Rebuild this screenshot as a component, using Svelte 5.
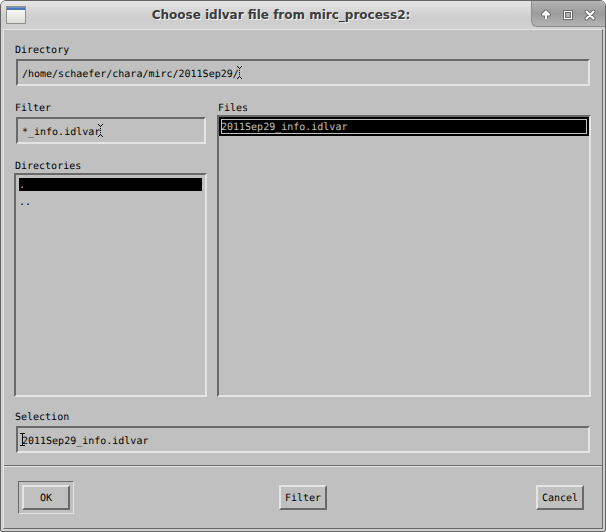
<script>
  let title = 'Choose idlvar file from mirc_process2:';
  let directory = $state('/home/schaefer/chara/mirc/2011Sep29/');
  let filter = $state('*_info.idlvar');
  let selection = $state('2011Sep29_info.idlvar');
  let dirs = ['.', '..'];
  let files = ['2011Sep29_info.idlvar'];
  let curDir = $state('.');
  let curFile = $state('2011Sep29_info.idlvar');

  function pickFile(f) {
    curFile = f;
    selection = f;
  }
</script>

{#snippet caret(pos, active)}
  <svg class="caret" style="left: calc(2px + {pos}ch)" width="5" height="13" viewBox="0 0 5 13" aria-hidden="true">
    {#if active}
      <path d="M0 .5h5M0 12.5h5M2.5 0v13" />
    {:else}
      <path d="M0 .5h1M4 .5h1M1 1.5h1M3 1.5h1M1 11.5h1M3 11.5h1M0 12.5h1M4 12.5h1M2.5 2v9" stroke-dasharray="1 1" />
    {/if}
  </svg>
{/snippet}

<div class="window">
  <header>
    <svg class="app" width="20" height="18" viewBox="0 0 20 18" aria-hidden="true">
      <defs>
        <linearGradient id="paper" x1="0" y1="0" x2="0" y2="1">
          <stop offset="0" stop-color="#fff" />
          <stop offset="1" stop-color="#dcdcd8" />
        </linearGradient>
      </defs>
      <rect x=".5" y=".5" width="19" height="17" fill="url(#paper)" stroke="#8f908c" />
      <rect x="1" y="1" width="18" height="3" fill="#4a78b5" />
      <rect x="1" y="1" width="18" height="1" fill="#7596c4" />
    </svg>
    <h1>{title}</h1>
    <div class="controls">
      <button aria-label="Shade">
        <svg width="12" height="12" viewBox="0 0 12 12">
          <path d="M6 9.500V3M3 5.500l3-3 3 3z" stroke="#707070" stroke-width="4" stroke-linejoin="round" />
          <path d="M6 10V3M3 5.500l3-3 3 3z" fill="#fff" stroke="#fff" stroke-width="2" stroke-linejoin="round" />
        </svg>
      </button>
      <button aria-label="Maximize">
        <svg width="12" height="12" viewBox="0 0 12 12">
          <rect x="1.500" y="1.500" width="9" height="9" fill="#fff" stroke="#707070" />
          <rect x="3.500" y="3.500" width="5" height="5" fill="#b0b0b0" stroke="#707070" />
        </svg>
      </button>
      <button aria-label="Close">
        <svg width="12" height="12" viewBox="0 0 12 12">
          <path d="M2.500 2.500l7 7M9.500 2.500l-7 7" stroke="#707070" stroke-width="4" stroke-linecap="round" />
          <path d="M2.500 2.500l7 7M9.500 2.500l-7 7" stroke="#fff" stroke-width="2" stroke-linecap="round" />
        </svg>
      </button>
    </div>
  </header>

  <main>
    <div class="form">
      <div class="group">
        <label for="directory">Directory</label>
        <div class="field">
          <input id="directory" bind:value={directory} />
          {@render caret(directory.length, false)}
        </div>
      </div>

      <div class="panes">
        <div class="side">
          <div class="group">
            <label for="filter">Filter</label>
            <div class="field">
              <input id="filter" bind:value={filter} />
              {@render caret(filter.length, false)}
            </div>
          </div>
          <div class="group tall">
            <span class="label" id="dirs">Directories</span>
            <div class="list dirs" role="listbox" aria-labelledby="dirs">
              {#each dirs as d}
                <button role="option" aria-selected={d === curDir} class:selected={d === curDir} onclick={() => (curDir = d)}>{d}</button>
              {/each}
            </div>
          </div>
        </div>
        <div class="group tall">
          <span class="label" id="files">Files</span>
          <div class="list files" role="listbox" aria-labelledby="files">
            {#each files as f}
              <button role="option" aria-selected={f === curFile} class:selected={f === curFile} onclick={() => pickFile(f)}>{f}</button>
            {/each}
          </div>
        </div>
      </div>

      <div class="group">
        <label for="selection">Selection</label>
        <div class="field">
          <input id="selection" bind:value={selection} />
          {@render caret(0, true)}
        </div>
      </div>
    </div>

    <div class="actions">
      <span class="ring default"><button>OK</button></span>
      <span class="ring"><button>Filter</button></span>
      <span class="ring"><button>Cancel</button></span>
    </div>
  </main>
</div>

<style>
  :global(body) { margin: 0; background: #fff; }
  * { box-sizing: border-box; }
  .window {
    --bg: #c0c0c0;
    --lo: #696969;
    --hi: #e4e4e4;
    display: flex;
    flex-direction: column;
    min-height: 100vh;
    padding: 0 2px 2px;
    border: 1px solid #656565;
    border-radius: 6px 6px 2px 2px;
    background: #d0d0d0;
    color: #000;
    font: 10px/13px "DejaVu Sans Mono", monospace;
  }
  button, input {
    margin: 0;
    padding: 0;
    border: 0;
    background: none;
    color: inherit;
    font: inherit;
  }
  main, main input, main button { text-rendering: geometricPrecision; }

  header {
    display: flex;
    align-items: center;
    height: 28px;
    margin: 0 -2px;
    padding-left: 5px;
    border-radius: 5px 5px 0 0;
    background: linear-gradient(#e6e6e6, #cdcdcd 60%, #d0d0d0);
  }
  h1 {
    flex: 1;
    margin: 0;
    padding-left: 5px;
    color: #3c3c3c;
    font: bold 12px/16px "DejaVu Sans", sans-serif;
    text-align: center;
    text-shadow: 1px 1px 0 #f4f4f4;
  }
  .controls {
    display: flex;
    align-self: flex-start;
    height: 26px;
    padding: 0 4px 0 3px;
    border-bottom: 1px solid #8c8c8c;
    border-left: 1px solid #8c8c8c;
    border-radius: 0 5px 0 6px;
    background: linear-gradient(#b4b4b4, #9c9c9c 50%, #b4b4b4);
  }
  .controls button {
    display: flex;
    align-items: center;
    justify-content: center;
    width: 22px;
    padding-top: 2px;
  }
  .controls svg { fill: none; }

  main {
    flex: 1;
    display: flex;
    flex-direction: column;
    border: 1px solid;
    border-color: var(--hi) var(--lo) var(--lo) var(--hi);
    background: var(--bg);
  }
  .form {
    flex: 1;
    display: flex;
    flex-direction: column;
    gap: 12px;
    padding: 12px 11px 12px 10px;
    border-bottom: 1px solid var(--lo);
  }
  .group {
    display: flex;
    flex-direction: column;
    gap: 2px;
  }
  .group.tall { flex: 1; gap: 0; }
  label, .label { padding: 2px 0 0 1px; }
  .panes {
    flex: 1;
    display: grid;
    grid-template-columns: 193px 1fr;
    gap: 10px;
    padding-top: 2px;
  }
  .side {
    display: flex;
    flex-direction: column;
    gap: 14px;
  }

  .field {
    position: relative;
    height: 27px;
    margin: 0 1px 0 2px;
    border: 2px solid;
    border-color: var(--lo) var(--hi) var(--hi) var(--lo);
  }
  .field input {
    display: block;
    width: 100%;
    height: 100%;
    padding: 4px 4px 0;
    line-height: 19px;
    outline: none;
  }
  .caret {
    position: absolute;
    top: 5px;
    fill: none;
    stroke: #000;
  }

  .list {
    flex: 1;
    display: flex;
    flex-direction: column;
    border: 2px solid;
    border-color: var(--lo) var(--hi) var(--hi) var(--lo);
  }
  .list button { text-align: left; }
  .list .selected { background: #000; color: var(--bg); }
  .dirs { gap: 4px; padding: 3px; }
  .dirs button { height: 13px; padding-top: 3px; line-height: 10px; }
  .files button { height: 19px; padding: 2px 2px 0; }
  .files .selected {
    outline: 1px solid var(--bg);
    outline-offset: -3px;
  }

  .actions {
    display: flex;
    justify-content: space-between;
    padding: 14px;
    border-top: 1px solid var(--hi);
  }
  .ring {
    padding: 3px;
    border: 1px solid transparent;
  }
  .ring.default { border-color: var(--lo) var(--hi) var(--hi) var(--lo); }
  .ring button {
    display: block;
    min-width: 48px;
    height: 25px;
    padding-top: 2px;
    border: 2px solid;
    border-color: var(--hi) var(--lo) var(--lo) var(--hi);
  }
</style>
